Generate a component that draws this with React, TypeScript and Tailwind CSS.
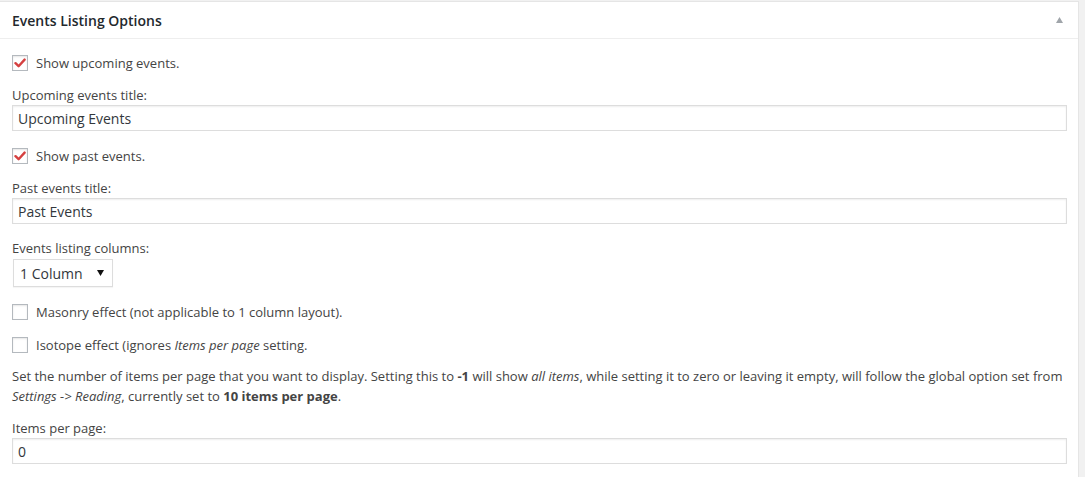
function CheckBox({ checked }: { checked?: boolean }) {
  return (
    <span className="flex h-[16px] w-[16px] shrink-0 items-center justify-center border border-[#b4b9be] bg-white shadow-[inset_0_1px_2px_rgba(0,0,0,0.1)]">
      {checked && (
        <svg width="12" height="12" viewBox="0 0 12 12">
          <path
            d="M1.5 6.2 L4.6 9.2 L10.6 2.6"
            fill="none"
            stroke="#d54040"
            strokeWidth="2.4"
            strokeLinecap="round"
            strokeLinejoin="round"
          />
        </svg>
      )}
    </span>
  );
}

function TextField({ value }: { value: string }) {
  return (
    <div className="flex h-[26px] items-center border border-[#ddd] bg-white pl-[5px] text-[14px] text-[#32373c] shadow-[inset_0_1px_2px_rgba(0,0,0,0.07)]">
      {value}
    </div>
  );
}

function CheckRow({ checked, children }: { checked?: boolean; children: React.ReactNode }) {
  return (
    <div className="flex h-[16px] items-center gap-[8px]">
      <CheckBox checked={checked} />
      <span className="leading-[18px]">{children}</span>
    </div>
  );
}

export default function App() {
  return (
    <main
      className="min-h-screen bg-[#f1f1f1] pt-[1px] text-[13px] text-[#444]"
      style={{ fontFamily: '"Open Sans", "Liberation Sans", sans-serif' }}
    >
      <section className="w-[1079px] border-t border-r border-[#e5e5e5] bg-white pb-[20px]">
        <header className="flex h-[37px] items-center justify-between border-b border-[#eee] pl-[12px] pr-[15px]">
          <h2 className="text-[14px] font-semibold text-[#23282d]">Events Listing Options</h2>
          <svg width="7" height="6" viewBox="0 0 7 6">
            <polygon points="3.5,0 7,6 0,6" fill="#a0a5aa" />
          </svg>
        </header>

        <div className="flex flex-col pl-[12px] pr-[11px]">
          <div className="mt-[16px]">
            <CheckRow checked>Show upcoming events.</CheckRow>
          </div>

          <p className="mt-[15px] leading-[18px]">Upcoming events title:</p>
          <div className="mt-[1px]">
            <TextField value="Upcoming Events" />
          </div>

          <div className="mt-[17px]">
            <CheckRow checked>Show past events.</CheckRow>
          </div>

          <p className="mt-[15px] leading-[18px]">Past events title:</p>
          <div className="mt-[1px]">
            <TextField value="Past Events" />
          </div>

          <p className="mt-[15px] leading-[18px]">Events listing columns:</p>
          <div className="mt-[2px] ml-[1px] flex h-[28px] w-[100px] items-center justify-between border border-[#ddd] bg-white pl-[6px] pr-[8px] text-[14px] text-[#32373c] shadow-[0_1px_1px_rgba(0,0,0,0.04)]">
            <span>1 Column</span>
            <svg width="7" height="6" viewBox="0 0 7 6">
              <polygon points="0,0 7,0 3.5,6" fill="#111" />
            </svg>
          </div>

          <div className="mt-[17px]">
            <CheckRow>Masonry effect (not applicable to 1 column layout).</CheckRow>
          </div>

          <div className="mt-[17px]">
            <CheckRow>
              Isotope effect (ignores <em>Items per page</em> setting.
            </CheckRow>
          </div>

          <p className="mt-[13px] leading-[20px]">
            Set the number of items per page that you want to display. Setting this to <strong>-1</strong> will
            show <em>all items</em>, while setting it to zero or leaving it empty, will follow the global option set
            from
            <br />
            <em>Settings -&gt; Reading</em>, currently set to <strong>10 items per page</strong>.
          </p>

          <p className="mt-[13px] leading-[18px]">Items per page:</p>
          <div className="mt-[1px]">
            <TextField value="0" />
          </div>
        </div>
      </section>
    </main>
  );
}
